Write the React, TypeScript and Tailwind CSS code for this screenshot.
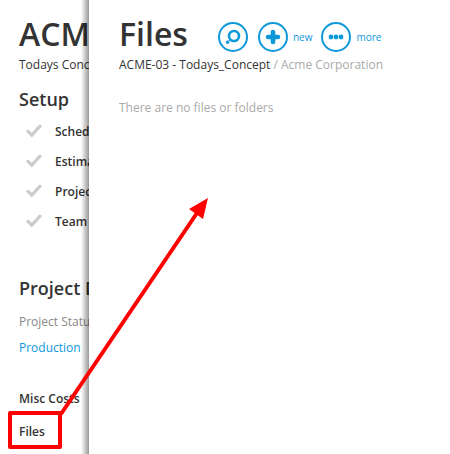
import type { ReactNode } from 'react';

const setupSteps = ['Schedule', 'Estimate', 'Project', 'Team'];

function CheckMark() {
    return (
        <svg width="16" height="16" viewBox="0 0 16 16" fill="none" className="shrink-0" aria-hidden="true">
            <path d="M2 7.4 L5.8 11.2 L14 2.2" stroke="#cccccc" strokeWidth="3.2" strokeLinecap="round" strokeLinejoin="miter" />
        </svg>
    );
}

interface RoundActionProps {
    label?: string;
    name: string;
    children: ReactNode;
}

function RoundAction({ label, name, children }: RoundActionProps) {
    return (
        <button type="button" aria-label={name} className="flex items-center gap-1 text-[#0d98da] text-[10px] leading-4 cursor-pointer">
            <svg width="32" height="32" viewBox="0 0 32 32" fill="none" aria-hidden="true">
                <circle cx="16" cy="16" r="14" stroke="currentColor" strokeWidth="2" />
                {children}
            </svg>
            {label && <span>{label}</span>}
        </button>
    );
}

function ProjectSidebar() {
    return (
        <aside className="w-[89px] shrink-0 overflow-hidden whitespace-nowrap pl-[19px] pt-[14px] pb-3">
            <h1 className="text-[32px] leading-10 font-semibold">ACME-03</h1>
            <p className="mt-px leading-5">Todays Concept</p>

            <h2 className="mt-3 text-lg leading-6 font-semibold">Setup</h2>
            <ul className="mt-[6px] pl-[7px]">
                {setupSteps.map((step) => (
                    <li key={step} className="flex items-center gap-[13px] h-[30px] font-semibold">
                        <CheckMark />
                        {step}
                    </li>
                ))}
            </ul>

            <h2 className="mt-[39px] text-lg leading-6 font-semibold">Project Details</h2>
            <p className="mt-3 leading-5 text-[#888888]">Project Status</p>
            <a href="#production" className="block mt-[6px] leading-5 text-[#0d98da]">Production</a>

            <nav className="mt-[31px] flex flex-col gap-[13px] font-semibold">
                <a href="#misc-costs" className="leading-5">Misc Costs</a>
                <a href="#files" className="leading-5">Files</a>
            </nav>
        </aside>
    );
}

function FilesPanel() {
    return (
        <main className="relative flex-1 min-w-0 bg-white pl-[30px] pt-[14px]">
            <div className="absolute inset-y-0 right-full w-2 bg-linear-to-r from-transparent to-black/40" />
            <header className="flex items-center">
                <h1 className="text-[32px] leading-10 font-semibold">Files</h1>
                <div className="flex items-center gap-2 ml-[29px] mt-[6px]">
                    <RoundAction name="Search">
                        <circle cx="17" cy="15" r="5" stroke="currentColor" strokeWidth="2.6" />
                        <path d="M13.5 18.5 L12 20" stroke="currentColor" strokeWidth="1.6" />
                        <circle cx="10.6" cy="21.2" r="1.7" fill="currentColor" />
                    </RoundAction>
                    <RoundAction name="New" label="new">
                        <path d="M16 11 V21 M11 16 H21" stroke="currentColor" strokeWidth="4.6" strokeLinecap="round" />
                    </RoundAction>
                    <RoundAction name="More" label="more">
                        <g fill="currentColor">
                            <circle cx="11" cy="16" r="2.4" />
                            <circle cx="16" cy="16" r="2.4" />
                            <circle cx="21" cy="16" r="2.4" />
                        </g>
                    </RoundAction>
                </div>
            </header>
            <p className="mt-px leading-5 whitespace-nowrap">
                ACME-03 - Todays_Concept <span className="text-[#aaaaaa]">/ Acme Corporation</span>
            </p>
            <p className="mt-[23px] leading-5 text-[#aaaaaa]">There are no files or folders</p>
        </main>
    );
}

// Red box around the Files link, with an arrow to the panel it opens
function Callout() {
    return (
        <svg
            width="220"
            height="454"
            viewBox="0 0 220 454"
            fill="none"
            className="absolute left-0 top-0 pointer-events-none"
            aria-hidden="true"
        >
            <rect x="10" y="413" width="50" height="34" stroke="#ff0000" strokeWidth="4" strokeLinejoin="round" />
            <path d="M61 414 L197 213" stroke="#ff0000" strokeWidth="4" />
            <path d="M208 198 L189 209 L203 219 Z" fill="#ff0000" />
        </svg>
    );
}

export default function App() {
    return (
        <div className="relative flex min-h-screen overflow-hidden bg-white text-[#333333] text-xs font-['Open_Sans',sans-serif]">
            <ProjectSidebar />
            <FilesPanel />
            <Callout />
        </div>
    );
}
